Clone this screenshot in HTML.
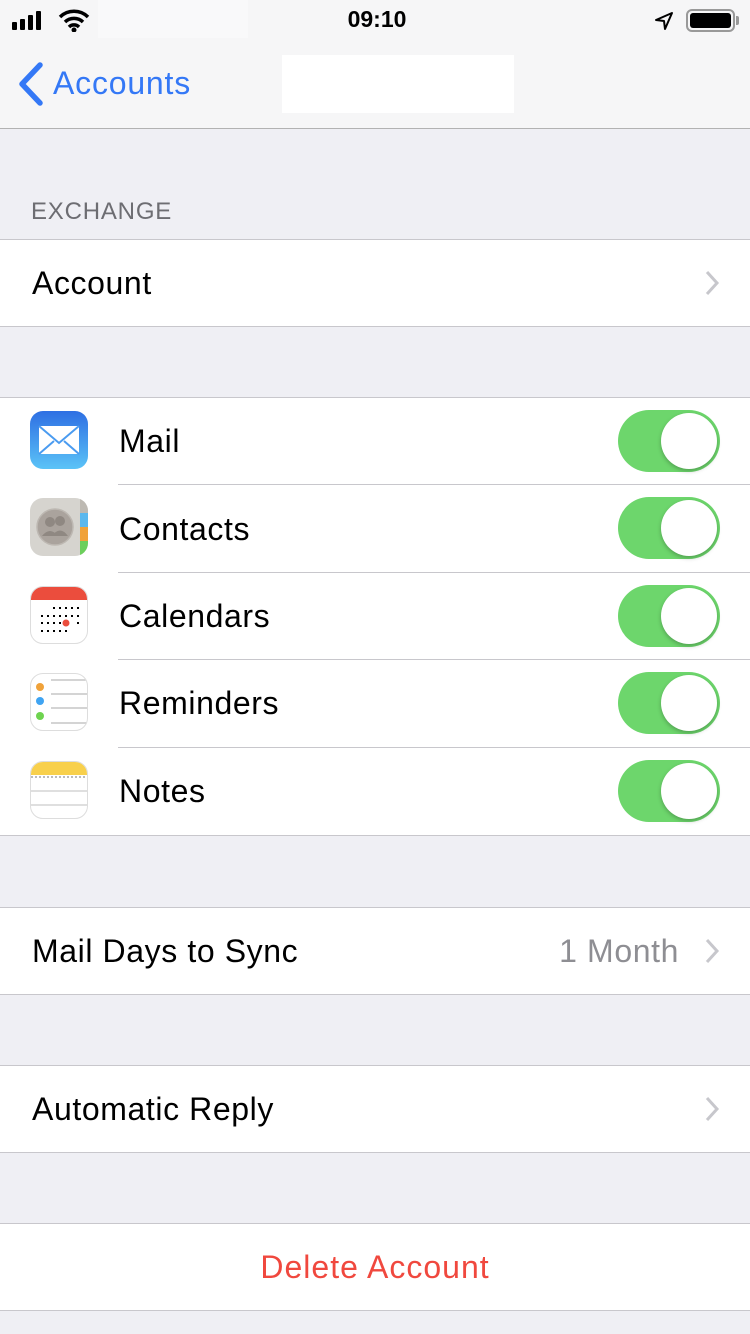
<!DOCTYPE html><html><head><style>
*{margin:0;padding:0;box-sizing:border-box}
body{width:750px;height:1334px;background:#efeff4;font-family:"Liberation Sans",sans-serif;position:relative;overflow:hidden}
.abs{position:absolute}
.nav{left:0;top:0;width:750px;height:129px;background:#f6f6f7;border-bottom:1px solid #b2b2b2}
.grp{position:absolute;left:0;width:750px;background:#fff;border-top:1px solid #c8c7cc;border-bottom:1px solid #c8c7cc}
.row{position:relative;height:86px;font-size:32px;letter-spacing:.6px;color:#000;display:flex;align-items:center}
.g5 .row{height:87.4px}
.sep{position:absolute;left:118px;right:0;bottom:0;border-bottom:1px solid #c8c7cc}
.chev{position:absolute;right:30px;top:29px}
.tog{position:absolute;left:618px;top:12px;width:102px;height:62px;border-radius:31px;background:#6dd66c}
.tog::after{content:"";position:absolute;right:3px;top:3px;width:56px;height:56px;border-radius:50%;background:#fff;box-shadow:0 2px 4px rgba(0,0,0,.25)}
.ic{position:absolute;left:30px;top:13px;width:58px;height:58px;border-radius:13px;overflow:hidden}
</style></head><body>
<div class="abs nav"></div>
<div class="abs" style="left:98px;top:0;width:150px;height:38px;background:#f9f9fa"></div>
<div class="abs" style="left:282px;top:55px;width:232px;height:58px;background:#fff"></div>
<svg class="abs" style="left:10px;top:10px" width="40" height="22"><rect x="2" y="12" width="5" height="8" rx="1"/><rect x="10" y="9" width="5" height="11" rx="1"/><rect x="18" y="5" width="5" height="15" rx="1"/><rect x="26" y="1" width="5" height="19" rx="1"/></svg>
<svg class="abs" style="left:58px;top:8px" width="32" height="24"><path d="M2 9a20 20 0 0 1 28 0M7 14a13 13 0 0 1 18 0M11 19a7 7 0 0 1 10 0" stroke="#000" stroke-width="3.5" fill="none"/><circle cx="16" cy="22" r="2.5"/></svg>
<div class="abs" style="left:2px;width:750px;top:6px;text-align:center;font-size:23px;font-weight:bold">09:10</div>
<svg class="abs" style="left:654px;top:11px" width="20" height="20"><path d="M18 2L2 9l8 1 1 8z" fill="none" stroke="#000" stroke-width="2" stroke-linejoin="round"/></svg>
<div class="abs" style="left:686px;top:9px;width:49px;height:23px;border:2px solid #999;border-radius:6px;padding:2px"><div style="background:#000;width:100%;height:100%;border-radius:3px"></div></div>
<div class="abs" style="left:736px;top:16px;width:3px;height:9px;background:#999;border-radius:0 2px 2px 0"></div>
<svg class="abs" style="left:16px;top:62px" width="28" height="44"><path d="M24 3L6 22l18 19" stroke="#3478f6" stroke-width="5.5" fill="none" stroke-linecap="round" stroke-linejoin="round"/></svg>
<div class="abs" style="left:53px;top:65px;font-size:32px;letter-spacing:.8px;color:#3478f6">Accounts</div>
<div class="abs" style="left:31px;top:198px;font-size:24px;color:#6d6d72;letter-spacing:.8px">EXCHANGE</div>
<div class="grp" style="top:239px"><div class="row" style="padding-left:32px">Account<svg class="chev" width="16" height="28"><path d="M3 3l10 11L3 25" stroke="#c7c7cc" stroke-width="3" fill="none"/></svg></div></div>
<div class="grp g5" style="top:397px">
<div class="row" style="padding-left:119px"><div class="ic" style="background:linear-gradient(#2e6fe3,#5bc3f7)"><svg width="58" height="58"><rect x="9" y="15" width="40" height="28" fill="#fff"/><path d="M9 15l20 17 20-17M9 43l15-13M49 43L34 30" stroke="#4a9bf0" stroke-width="2" fill="none"/></svg></div>Mail<div class="tog"></div><div class="sep"></div></div>
<div class="row" style="padding-left:119px"><div class="ic" style="background:#d6d4cf"><svg width="58" height="58"><rect x="50" y="0" width="8" height="15" fill="#bdb9b2"/><rect x="50" y="15" width="8" height="14" fill="#5bb8ee"/><rect x="50" y="29" width="8" height="14" fill="#f0a23a"/><rect x="50" y="43" width="8" height="15" fill="#6ccf5c"/><circle cx="25" cy="29" r="18" fill="#aaa39d" stroke="#bdb8b2" stroke-width="1.5"/><circle cx="20" cy="24" r="5" fill="#8f8882"/><circle cx="30" cy="23" r="5" fill="#8f8882"/><path d="M12 38q8-10 16 0M22 38q8-11 16 0" fill="#8f8882"/></svg></div>Contacts<div class="tog"></div><div class="sep"></div></div>
<div class="row" style="padding-left:119px"><div class="ic" style="background:#fff;border:1px solid #ddd"><svg width="58" height="58"><rect x="0" y="0" width="58" height="13" fill="#eb4d3d"/><g fill="#000"><path d="M22 20h2v2h-2zM28 20h2v2h-2zM34 20h2v2h-2zM40 20h2v2h-2zM46 20h2v2h-2zM10 28h2v2h-2zM16 28h2v2h-2zM22 28h2v2h-2zM28 28h2v2h-2zM34 28h2v2h-2zM40 28h2v2h-2zM46 28h2v2h-2zM10 35h2v2h-2zM16 35h2v2h-2zM22 35h2v2h-2zM28 35h2v2h-2zM46 35h2v2h-2zM10 43h2v2h-2zM16 43h2v2h-2zM22 43h2v2h-2zM28 43h2v2h-2zM34 43h2v2h-2z"/></g><circle cx="35" cy="36" r="3.5" fill="#eb4d3d"/></svg></div>Calendars<div class="tog"></div><div class="sep"></div></div>
<div class="row" style="padding-left:119px"><div class="ic" style="background:#fff;border:1px solid #ddd"><svg width="58" height="58"><g stroke="#bbb" stroke-width="1.2"><path d="M20 6h38M20 20h38M20 34h38M20 49h38"/></g><circle cx="9" cy="13" r="4" fill="#f0a23a"/><circle cx="9" cy="27" r="4" fill="#3fa4f2"/><circle cx="9" cy="42" r="4" fill="#6ed34f"/></svg></div>Reminders<div class="tog"></div><div class="sep"></div></div>
<div class="row" style="padding-left:119px"><div class="ic" style="background:#fff;border:1px solid #ddd"><svg width="58" height="58"><rect width="58" height="13" fill="#f8d04c"/><path d="M0 15h58" stroke="#bbb" stroke-width="2" stroke-dasharray="2 2"/><path d="M0 29h58M0 43h58" stroke="#ccc" stroke-width="1.2"/></svg></div>Notes<div class="tog"></div></div>
</div>
<div class="grp" style="top:907px"><div class="row" style="padding-left:32px">Mail Days to Sync<span style="position:absolute;right:71px;color:#8e8e93">1 Month</span><svg class="chev" width="16" height="28"><path d="M3 3l10 11L3 25" stroke="#c7c7cc" stroke-width="3" fill="none"/></svg></div></div>
<div class="grp" style="top:1065px"><div class="row" style="padding-left:32px">Automatic Reply<svg class="chev" width="16" height="28"><path d="M3 3l10 11L3 25" stroke="#c7c7cc" stroke-width="3" fill="none"/></svg></div></div>
<div class="grp" style="top:1223px"><div class="row" style="justify-content:center;color:#f0483e;letter-spacing:1px">Delete Account</div></div>
</body></html>
